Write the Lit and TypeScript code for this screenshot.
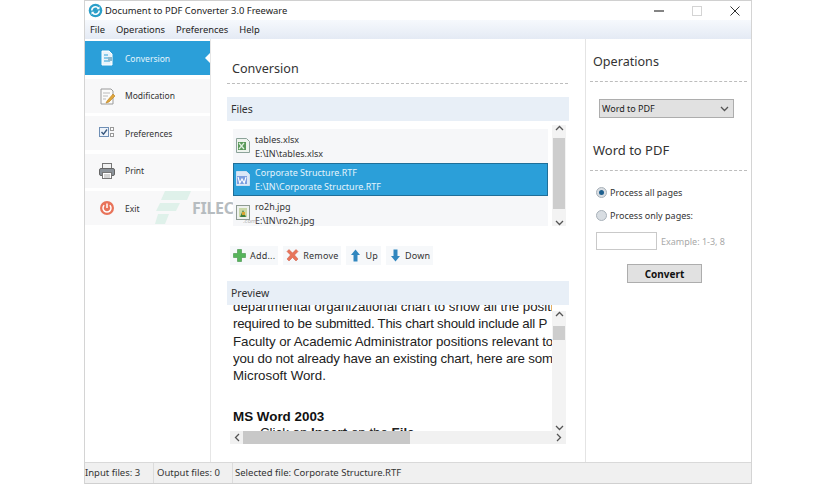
import { LitElement, html, css, svg } from "lit";
import { customElement } from "lit/decorators.js";

const icons: Record<string, unknown> = {
  conv: svg`<path d="M4 2h7l3 3v11H4z" fill="#e8f4fb" stroke="#fff"/><path d="M6 6h4M6 9h6M6 12h6" stroke="#2b9fd9" stroke-width="1.2"/><rect x="10" y="8" width="4" height="4" fill="#8fb8cc"/>`,
  mod: svg`<path d="M3 2h10l2 2v13H3z" fill="#fbfbfb" stroke="#9a9a9a"/><path d="M5 6h7M5 9h5M5 12h3" stroke="#bbb"/><path d="M9 14l6-7 2 2-6 6-3 1z" fill="#e0a63c" stroke="#b97f20" stroke-width=".6"/>`,
  pref: svg`<rect x="1.500" y="3.500" width="9" height="9" fill="#eef3fa" stroke="#6f8fb5"/><path d="M3.500 8l2 2.200 3.500-4.700" fill="none" stroke="#39597f" stroke-width="1.400"/><rect x="12.500" y="3.500" width="3" height="3" fill="#fff" stroke="#999"/><rect x="12.500" y="9.500" width="3" height="3" fill="#fff" stroke="#999"/>`,
  print: svg`<rect x="4.500" y="1.500" width="9" height="5" fill="#f2f2f2" stroke="#777"/><rect x="1.500" y="6.500" width="15" height="7" rx="1.500" fill="#8b9299" stroke="#666"/><rect x="4.500" y="10.500" width="9" height="6" fill="#fff" stroke="#777"/><path d="M6 13h6M6 15h6" stroke="#aaa"/>`,
  exit: svg`<circle cx="9" cy="9" r="7" fill="#e8735a"/><path d="M9 4.500v4.500" stroke="#fff" stroke-width="1.500"/><path d="M6.200 6.200a4 4 0 1 0 5.600 0" fill="none" stroke="#fff" stroke-width="1.500"/>`,
  xlsx: svg`<path d="M1.500 1.500h10l3 3v11h-13z" fill="#eef4ee" stroke="#8ca39a"/><rect x="3" y="5" width="8" height="8" fill="#5a9a5a"/><path d="M4 6l5 6M9 6l-5 6" stroke="#dff0df" stroke-width="1.200"/>`,
  word: svg`<path d="M1.500 1.500h10l3 3v11h-13z" fill="#dbe8f7" stroke="#cfe0f2"/><rect x="2" y="6" width="10" height="8" fill="#7d9fe0"/><path d="M3 7l1.800 6 2.200-4 2.200 4L11 7" fill="none" stroke="#fff" stroke-width="1.100"/>`,
  jpg: svg`<rect x="1.500" y="1.500" width="13" height="14" fill="#eef1ee" stroke="#8d9a92"/><rect x="4" y="4" width="8" height="9" fill="#c9d8a8"/><path d="M5 13l3-7 3 7z" fill="#3f7d3c"/><rect x="7" y="8" width="3" height="3" fill="#d9a532"/>`,
};
const icon = (n: string, s = 18) =>
  html`<svg width=${s} height=${s} viewBox="0 0 18 18">${icons[n]}</svg>`;

@customElement("app-root")
export class AppRoot extends LitElement {
  static styles = css`
    :host {
      display: block;
      width: 836px;
      height: 484px;
      background: #fff;
      font-family: "Noto Sans", "Open Sans", sans-serif;
      color: #222;
      box-sizing: border-box;
      padding-left: 84px;
      overflow: hidden;
    }
    * { box-sizing: border-box; }
    .window {
      position: relative;
      width: 668px;
      height: 484px;
      border-left: 1px solid #d4d4d4;
      border-right: 1px solid #d4d4d4;
      border-top: 1px solid #d0d0d0;
      display: flex;
      flex-direction: column;
      background: #fff;
    }
    .title { height: 19px; display: flex; align-items: center; padding-left: 3px; gap: 2px; font-size: 9.400px; flex: none; }
    .title .name { flex: 1; }
    .wc { display: flex; align-items: center; width: 86px; margin-right: 11px; justify-content: space-between; }
    .menu {
      height: 19px; flex: none; display: flex; align-items: center; gap: 11px; padding-left: 5px; font-size: 9.400px;
      background: linear-gradient(#f6f9fd, #e4eaf4);
    }
    .main { flex: 1; display: flex; min-height: 0; position: relative; }
    .side { width: 126px; flex: none; border-right: 1px solid #e6e6e6; padding-top: 2px; display: flex; flex-direction: column; gap: 3.500px; }
    .nav { height: 34px; display: flex; align-items: center; gap: 9px; padding-left: 13px; font-size: 8.500px; background: #f8f8f9; position: relative; width: 125px; color: #333; }
    .nav.on { background: #2b9fd9; color: #e6f5fc; }
    .nav.on::after {
      content: ""; position: absolute; right: 0; top: 12px; border: 5px solid transparent; border-right-color: #fff; border-left: 0;
    }
    .mid { width: 374px; flex: none; padding: 0 16px 0 16px; position: relative; }
    .h { font-size: 12.600px; line-height: 20px; color: #333; }
    .mid > .h { padding: 20px 0 4px 5px; border-bottom: 1px dashed #bdbdbd; width: 341px; height: 45px; }
    .band { height: 24px; background: #e8eff7; display: flex; align-items: center; padding-left: 4px; font-size: 10.500px; color: #333; }
    .mid .band.files { margin-top: 13px; }
    .listwrap { display: flex; margin-top: 4px; height: 101px; gap: 4px; padding-left: 6px; }
    .list { width: 315px; height: 97px; margin-top: 4px; background: #f6f7f9; position: relative; z-index: 1; }
    .row { height: 33.500px; display: flex; align-items: center; gap: 2px; padding: 3px 2px 0; font-size: 9px; line-height: 14.500px; color: #333; }
    .row svg { margin-top: -2px; }
    .row.sel { background: #2b9fd9; color: #e4f4fc; border: 1px solid #1f6f99; padding: 2px 2px 0 1px; }
    .vbar { width: 14px; background: #f0f0f0; display: flex; flex-direction: column; align-items: center; justify-content: space-between; }
    .vbar.list-bar { height: 101px; position: relative; background: #f3f3f3; }
    .thumb { background: #cdcdcd; width: 12px; position: absolute; left: 1px; }
    .tools { display: flex; margin-top: 20px; height: 19px; padding-left: 3px; gap: 5px; }
    .tool { height: 19px; display: flex; align-items: center; gap: 3px; padding: 0 3px 0 2px; background: #f6f8fa; font-size: 9px; color: #333; letter-spacing: .2px; }
    .tool.tight { gap: 2px; }
    .band.preview { margin-top: 16px; }
    .preview-box { position: relative; height: 139px; }
    .doc { position: absolute; left: 6px; top: 0; width: 319px; height: 126px; overflow: hidden; font-family: "Liberation Sans", Arial, sans-serif; font-size: 13.300px; line-height: 17.300px; color: #222; white-space: nowrap; }
    .doc .in { margin-top: -7px; }
    .l2 { letter-spacing: -.23px; }
    .l3 { letter-spacing: -.05px; }
    .l4 { letter-spacing: -.15px; }
    .doc b { display: block; margin-top: 24px; font-size: 13.400px; color: #111; }
    .doc .in2 { padding-left: 27px; margin-top: -2px; }
    .pv { position: absolute; left: 325px; top: 6px; height: 120px; background: #f3f3f3; }
    .ph { position: absolute; left: 3px; top: 126px; width: 336px; height: 13px; background: #f1f1f1; display: flex; align-items: center; justify-content: space-between; padding: 0 4px; }
    .ph .hthumb { position: absolute; left: 13px; top: 0; width: 167px; height: 13px; background: #c8c8c8; }
    .right { flex: 1; border-left: 1px solid #e4e4e4; padding: 0 4px; font-size: 9px; color: #333; }
    .right .sect { height: 43px; padding: 13px 0 0 3px; border-bottom: 1px dashed #bdbdbd; }
    .right .sect.two { height: 53px; padding-top: 22px; font-size: 13px; }
    .select { margin: 17px 0 0 9px; width: 135px; height: 19px; background: #e1e1e1; border: 1px solid #adadad; display: flex; align-items: center; justify-content: space-between; padding: 0 4px 0 2px; color: #222; }
    .radio { display: flex; align-items: center; gap: 3px; margin-left: 6px; height: 14px; }
    .radio i { width: 11px; height: 11px; border-radius: 50%; background: #d8dde2; border: 1px solid #a9b2ba; display: flex; align-items: center; justify-content: center; }
    .radio i.on::after { content: ""; width: 5px; height: 5px; border-radius: 50%; background: #1d5f8e; }
    .r1 { margin-top: 14px; }
    .r2 { margin-top: 9px; }
    .ex { display: flex; align-items: center; margin: 10px 0 0 6px; gap: 4px; color: #a8a8a8; }
    .ex span { width: 61px; height: 18px; border: 1px solid #c9c9c9; background: #fff; }
    .convert { margin: 14px 0 0 37px; width: 75px; height: 19px; background: #e1e1e1; border: 1px solid #adadad; display: flex; align-items: center; justify-content: center; font-weight: 700; color: #111; font-size: 10px; }
    .status { height: 22px; flex: none; background: #f0f0f0; border-top: 1px solid #d9d9d9; border-bottom: 1px solid #d0d0d0; display: flex; font-size: 9.500px; line-height: 20px; color: #333; }
    .status div { border-right: 1px solid #dcdcdc; }
    .status .c1 { width: 69px; }
    .status .c2 { width: 79px; padding-left: 3px; }
    .status .c3 { border: 0; padding-left: 2px; }
    .mark { position: absolute; left: 70px; top: 152px; display: flex; align-items: center; gap: 1px; pointer-events: none; color: #b6bcc0; font-weight: 700; font-size: 16px; letter-spacing: -.3px; }
    .com { position: absolute; left: 158px; top: 178px; font-size: 6px; color: #b0b0b0; z-index: 2; }
  `;

  private chev(up: boolean) {
    return html`<svg width="9" height="7" viewBox="0 0 9 7"><path d=${up ? "M1 5l3.500-3.500L8 5" : "M1 2l3.500 3.500L8 2"} fill="none" stroke="#555" stroke-width="1.300"/></svg>`;
  }
  private chevH(left: boolean) {
    return html`<svg width="7" height="9" viewBox="0 0 7 9"><path d=${left ? "M5 1L1.500 4.500 5 8" : "M2 1l3.500 3.500L2 8"} fill="none" stroke="#555" stroke-width="1.300"/></svg>`;
  }

  render() {
    return html`<div class="window">
      <div class="title">
        <svg width="15" height="15" viewBox="0 0 15 15"><circle cx="7.500" cy="7.500" r="6.800" fill="#2b9fc9"/><path d="M3.800 7.500a3.700 3.700 0 0 1 6.500-2.400M11.200 7.500a3.700 3.700 0 0 1-6.500 2.400" fill="none" stroke="#fff" stroke-width="1.500"/><path d="M11.500 3.300v3h-3zM3.500 11.700v-3h3z" fill="#fff"/></svg>
        <span class="name">Document to PDF Converter 3.0 Freeware</span>
        <div class="wc">
          <svg width="10" height="10" viewBox="0 0 10 10"><path d="M0 5h10" stroke="#333" stroke-width="1.200"/></svg>
          <svg width="10" height="10" viewBox="0 0 10 10"><rect x=".5" y=".5" width="9" height="9" fill="none" stroke="#d4d4d4"/></svg>
          <svg width="10" height="10" viewBox="0 0 10 10"><path d="M.5.5l9 9M9.500.5l-9 9" stroke="#333"/></svg>
        </div>
      </div>
      <div class="menu"><span>File</span><span>Operations</span><span>Preferences</span><span>Help</span></div>
      <div class="main">
        <div class="side">
          <div class="nav on">${icon("conv")}<span>Conversion</span></div>
          <div class="nav">${icon("mod")}<span>Modification</span></div>
          <div class="nav">${icon("pref")}<span>Preferences</span></div>
          <div class="nav">${icon("print")}<span>Print</span></div>
          <div class="nav">${icon("exit")}<span>Exit</span></div>
        </div>
        <div class="mid">
          <div class="h">Conversion</div>
          <div class="band files">Files</div>
          <div class="listwrap">
            <div class="list">
              <div class="row">${icon("xlsx")}<div>tables.xlsx<br />E:\\IN\\tables.xlsx</div></div>
              <div class="row sel">${icon("word")}<div>Corporate Structure.RTF<br />E:\\IN\\Corporate Structure.RTF</div></div>
              <div class="row">${icon("jpg")}<div>ro2h.jpg<br />E:\\IN\\ro2h.jpg</div></div>
            </div>
            <div class="vbar list-bar">
              ${this.chev(true)}<div class="thumb" style="top:13px;height:71px"></div>${this.chev(false)}
            </div>
          </div>
          <div class="tools">
            <div class="tool"><svg width="15" height="15" viewBox="0 0 15 15"><path d="M5.500 1.500h4v4h4v4h-4v4h-4v-4h-4v-4h4z" fill="#55b45a" stroke="#3f9147" stroke-width=".6"/></svg>Add...</div>
            <div class="tool"><svg width="15" height="15" viewBox="0 0 15 15"><path d="M2 3.500L4 1.500 7.500 5 11 1.500l2 2L9.500 7l3.500 4-2 2-3.500-3.500L4 13l-2-2L5.500 7z" fill="#e8745a" stroke="#cc5a44" stroke-width=".5"/></svg>Remove</div>
            <div class="tool tight"><svg width="15" height="15" viewBox="0 0 15 15"><path d="M7.500 1.500L12 7H9.500v6.500h-4V7H3z" fill="#3187bf"/></svg>Up</div>
            <div class="tool tight"><svg width="15" height="15" viewBox="0 0 15 15"><path d="M7.500 13.500L12 8H9.500V1.500h-4V8H3z" fill="#3187bf"/></svg>Down</div>
          </div>
          <div class="band preview">Preview</div>
          <div class="preview-box">
            <div class="doc"><div class="in">
              departmental organizational chart to show all the positio<br />
              <span class="l2">required to be submitted. This chart should include all P</span><br />
              <span class="l3">Faculty or Academic Administrator positions relevant to</span><br />
              <span class="l4">you do not already have an existing chart, here are som</span><br />
              Microsoft Word.
              <b>MS Word 2003</b>
              <div class="in2">Click on <strong>Insert</strong> on the <strong>File</strong></div>
            </div></div>
            <div class="vbar pv">${this.chev(true)}<div class="thumb" style="top:15px;height:14px"></div>${this.chev(false)}</div>
            <div class="ph">${this.chevH(true)}<div class="hthumb"></div>${this.chevH(false)}</div>
          </div>
        </div>
        <div class="right">
          <div class="h sect">Operations</div>
          <div class="select"><span>Word to PDF</span>${this.chev(false)}</div>
          <div class="h sect two">Word to PDF</div>
          <div class="radio r1"><i class="on"></i><span>Process all pages</span></div>
          <div class="radio r2"><i></i><span>Process only pages:</span></div>
          <div class="ex"><span></span>Example: 1-3, 8</div>
          <div class="convert">Convert</div>
        </div>
        <div class="mark">
          <svg width="36" height="34" viewBox="0 0 36 34"><path d="M10 0h26l-4 9H6zM5 12h20l-4 8H1zM3 23h11l-4 10H0z" fill="#dff1ea"/></svg>
          <span>FILECR</span>
        </div>
        <div class="com">.com</div>
      </div>
      <div class="status">
        <div class="c1">Input files: 3</div>
        <div class="c2">Output files: 0</div>
        <div class="c3">Selected file: Corporate Structure.RTF</div>
      </div>
    </div>`;
  }
}
